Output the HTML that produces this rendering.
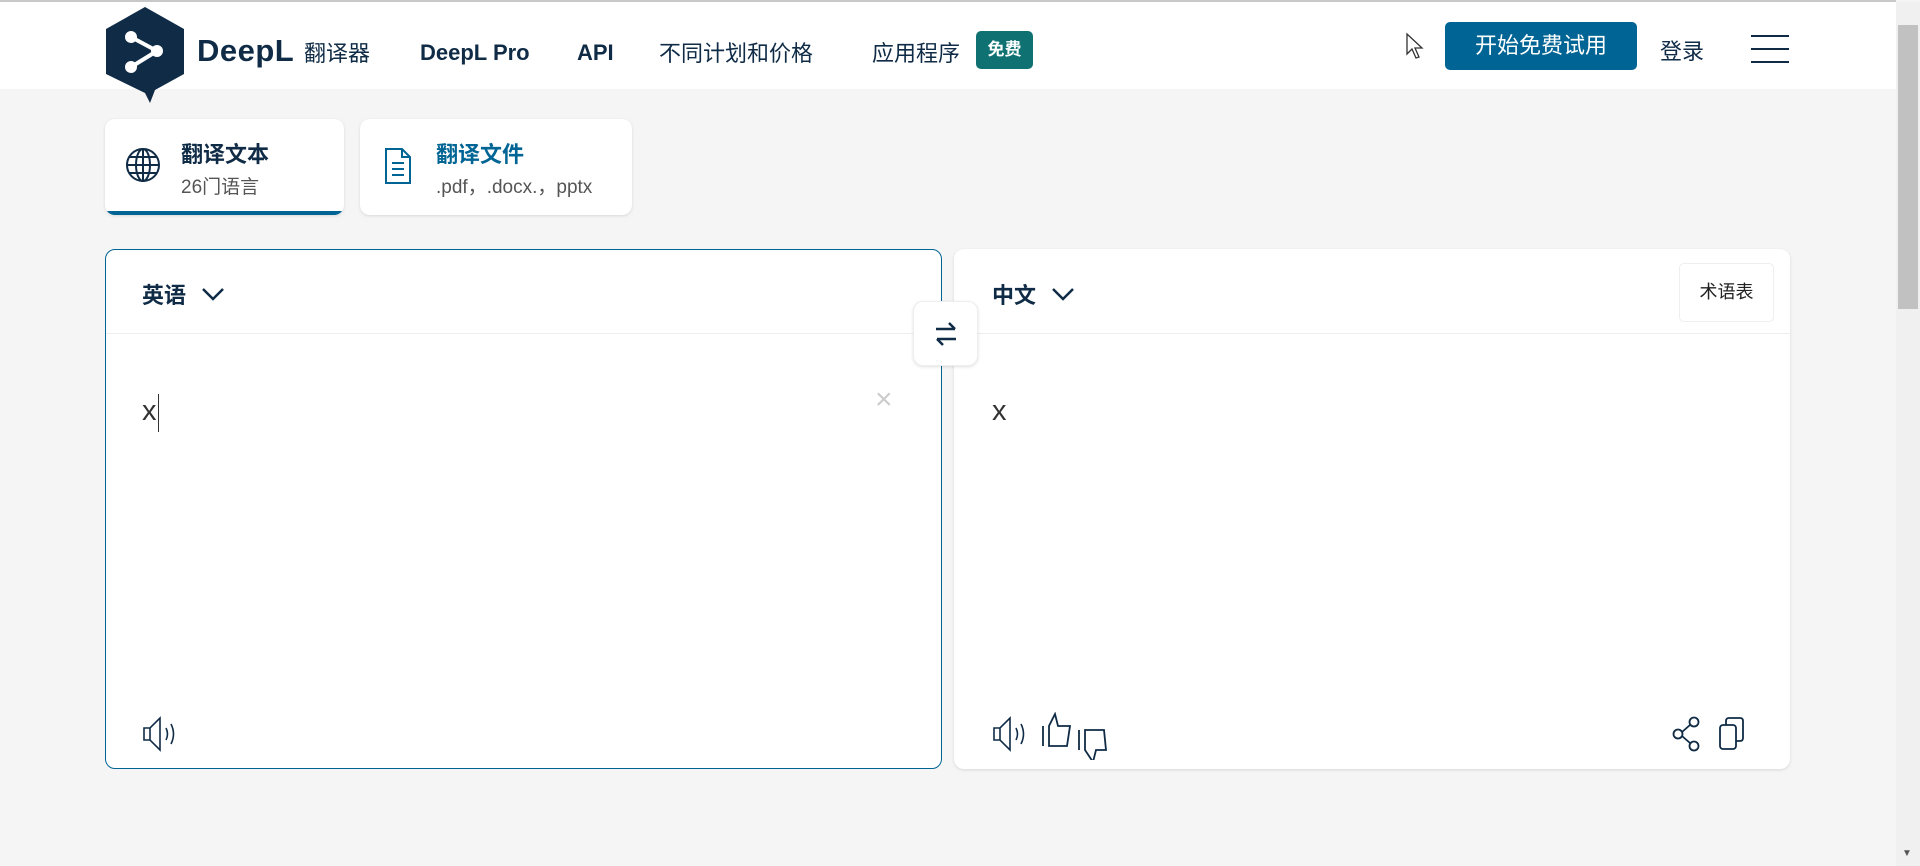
<!DOCTYPE html>
<html><head><meta charset="utf-8"><style>
*{margin:0;padding:0;box-sizing:border-box}
body{width:1920px;height:866px;overflow:hidden;background:#f5f5f5;font-family:"Liberation Sans","Noto Sans CJK SC",sans-serif;color:#0f2b46;position:relative}
.a{position:absolute}
.hdr{left:0;top:0;width:1896px;height:89px;background:#fff;border-top:2px solid #c8c8c8}
.nav{font-size:22px;top:36px;color:#0f2b46}
.card{background:#fff;border-radius:10px;box-shadow:0 1px 3px rgba(0,0,0,.12)}
</style></head><body>
<div class="a hdr"></div>
<svg class="a" style="left:105px;top:7px" width="80" height="97" viewBox="0 0 80 97"><path d="M40 0 L79 22 L79 67 L50 83 L45 96 L40 86 L1 67 L1 22 Z" fill="#0f2b46"/><path d="M26 30 L52 44 L26 60" stroke="#fff" stroke-width="4" fill="none"/><circle cx="26" cy="30" r="6" fill="#fff"/><circle cx="52" cy="44" r="6" fill="#fff"/><circle cx="26" cy="60" r="6" fill="#fff"/></svg>
<div class="a" style="left:197px;top:33px;font-size:31px;font-weight:bold;letter-spacing:0.5px">DeepL</div>
<div class="a" style="left:304px;top:36px;font-size:22px">翻译器</div>
<div class="a nav" style="left:420px;top:40px;font-weight:bold">DeepL Pro</div>
<div class="a nav" style="left:577px;top:40px;font-weight:bold">API</div>
<div class="a nav" style="left:659px;top:36px">不同计划和价格</div>
<div class="a nav" style="left:872px;top:36px">应用程序</div>
<div class="a" style="left:976px;top:31px;width:57px;height:38px;background:#0f7171;border-radius:5px;color:#fff;font-size:17px;font-weight:bold;text-align:center;line-height:38px">免费</div>
<svg class="a" style="left:1405px;top:32px" width="22" height="28" viewBox="0 0 22 28"><path d="M2 2 L2 22 L7 17 L11 26 L14 25 L10 16 L17 16 Z" fill="#fff" stroke="#333" stroke-width="1.3"/></svg>
<div class="a" style="left:1445px;top:22px;width:192px;height:48px;background:#006494;border-radius:5px;color:#fff;font-size:22px;text-align:center;line-height:48px">开始免费试用</div>
<div class="a nav" style="left:1660px;top:34px">登录</div>
<div class="a" style="left:1751px;top:35px;width:38px;height:2px;background:#0f2b46"></div>
<div class="a" style="left:1751px;top:48px;width:38px;height:2px;background:#0f2b46"></div>
<div class="a" style="left:1751px;top:61px;width:38px;height:2px;background:#0f2b46"></div>
<div class="a" style="left:1896px;top:2px;width:24px;height:864px;background:#f0f0f0"></div>
<div class="a" style="left:1898px;top:25px;width:20px;height:284px;background:#c1c1c1"></div>
<div class="a" style="left:1902px;top:848px;font-size:10px;color:#555">▼</div>

<div class="a card" style="left:105px;top:119px;width:239px;height:96px;overflow:hidden">
<div class="a" style="left:0;bottom:0;width:100%;height:4px;background:#006494"></div></div>
<svg class="a" style="left:125px;top:147px" width="36" height="36" viewBox="0 0 36 36" fill="none" stroke="#0f2b46" stroke-width="2"><circle cx="18" cy="18" r="16"/><ellipse cx="18" cy="18" rx="7" ry="16"/><path d="M2 18H34M4 10H32M4 26H32M18 2V34"/></svg>
<div class="a" style="left:181px;top:137px;font-size:22px;font-weight:bold">翻译文本</div>
<div class="a" style="left:181px;top:172px;font-size:19px;color:#555">26门语言</div>
<div class="a card" style="left:360px;top:119px;width:272px;height:96px"></div>
<svg class="a" style="left:384px;top:147px" width="28" height="38" viewBox="0 0 28 38" fill="none" stroke="#006494" stroke-width="2"><path d="M2 2H18L26 10V36H2Z M18 2V10H26 M8 16H20M8 22H20M8 28H20"/></svg>
<div class="a" style="left:436px;top:137px;font-size:22px;font-weight:bold;color:#006494">翻译文件</div>
<div class="a" style="left:436px;top:172px;font-size:19px;color:#555">.pdf，.docx.，pptx</div>

<div class="a card" style="left:105px;top:249px;width:837px;height:520px;border:1px solid #006494;box-shadow:none"></div>
<div class="a" style="left:106px;top:333px;width:835px;height:1px;background:#eee"></div>
<div class="a" style="left:142px;top:278px;font-size:22px;font-weight:bold">英语</div>
<svg class="a" style="left:200px;top:285px" width="26" height="18" viewBox="0 0 26 18"><path d="M3 4L13 14L23 4" fill="none" stroke="#0f2b46" stroke-width="2.5"/></svg>
<div class="a" style="left:142px;top:395px;font-size:29px;color:#333">x</div>
<div class="a" style="left:158px;top:394px;width:1px;height:38px;background:#333"></div>
<div class="a" style="left:875px;top:383px;font-size:30px;color:#ccc">×</div>
<svg class="a" style="left:142px;top:716px" width="40" height="36" viewBox="0 0 40 36" fill="none" stroke="#0f2b46" stroke-width="1.6"><path d="M2 12H8L18 2V34L8 24H2Z M8 12V24 M24 12Q27 18 24 24 M29 8Q34 18 29 28"/></svg>

<div class="a card" style="left:954px;top:249px;width:836px;height:520px"></div>
<div class="a" style="left:954px;top:333px;width:836px;height:1px;background:#eee"></div>
<div class="a" style="left:992px;top:278px;font-size:22px;font-weight:bold">中文</div>
<svg class="a" style="left:1050px;top:285px" width="26" height="18" viewBox="0 0 26 18"><path d="M3 4L13 14L23 4" fill="none" stroke="#0f2b46" stroke-width="2.5"/></svg>
<div class="a" style="left:1679px;top:263px;width:95px;height:59px;border:1px solid #eee;border-radius:5px;font-size:18px;text-align:center;line-height:57px;color:#222">术语表</div>
<div class="a" style="left:992px;top:395px;font-size:29px;color:#333">x</div>
<svg class="a" style="left:992px;top:716px" width="40" height="36" viewBox="0 0 40 36" fill="none" stroke="#0f2b46" stroke-width="1.6"><path d="M2 12H8L18 2V34L8 24H2Z M8 12V24 M24 12Q27 18 24 24 M29 8Q34 18 29 28"/></svg>
<svg class="a" style="left:1040px;top:712px" width="72" height="48" viewBox="0 0 72 48" fill="none" stroke="#0f2b46" stroke-width="1.8"><path d="M3 14V34 M9 14V34H27L30 14H18L15 2L9 14Z M39 18V38 M45 18H64L66 38H56L53 50L45 38Z"/></svg>
<svg class="a" style="left:1670px;top:716px" width="34" height="36" viewBox="0 0 34 36" fill="none" stroke="#0f2b46" stroke-width="1.8"><circle cx="24" cy="6" r="4.5"/><circle cx="8" cy="18" r="4.5"/><circle cx="24" cy="30" r="4.5"/><path d="M12 16L20 9M12 20L20 27"/></svg>
<svg class="a" style="left:1718px;top:716px" width="34" height="36" viewBox="0 0 34 36" fill="none" stroke="#0f2b46" stroke-width="1.8"><rect x="2" y="9" width="16" height="24" rx="3"/><path d="M8 9V5Q8 2 11 2H22Q25 2 25 5V22Q25 25 22 25H18"/></svg>

<div class="a card" style="left:913px;top:301px;width:65px;height:65px;border:1px solid #eee"></div>
<svg class="a" style="left:933px;top:321px" width="26" height="26" viewBox="0 0 26 26" fill="none" stroke="#0f2b46" stroke-width="2.5"><path d="M3 8H22M16 2L22 8 M23 18H4M10 24L4 18"/></svg>
</body></html>
